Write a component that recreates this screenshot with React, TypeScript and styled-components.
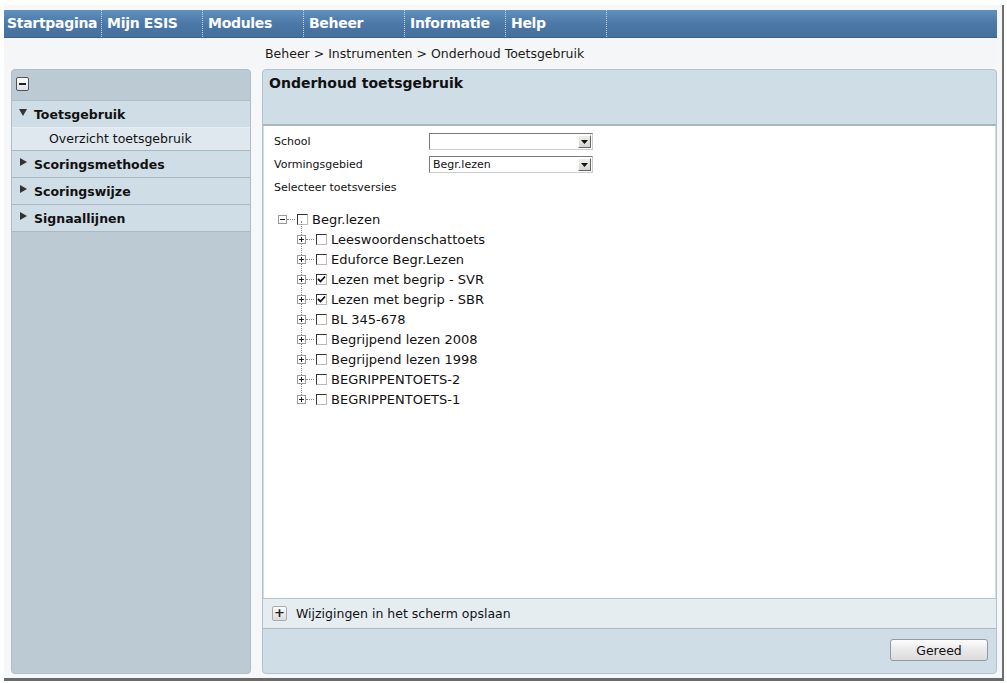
import React from 'react'
import styled, { createGlobalStyle } from 'styled-components'

const GlobalStyle = createGlobalStyle`
  html, body {
    margin: 0;
    padding: 0;
    background: #fff;
    font-family: "DejaVu Sans", Verdana, sans-serif;
    color: #111;
  }
`

const navItems = ['Startpagina', 'Mijn ESIS', 'Modules', 'Beheer', 'Informatie', 'Help']

const menu = [
  { title: 'Toetsgebruik', open: true, children: ['Overzicht toetsgebruik'] },
  { title: 'Scoringsmethodes', open: false, children: [] },
  { title: 'Scoringswijze', open: false, children: [] },
  { title: 'Signaallijnen', open: false, children: [] },
]

const versions = [
  { name: 'Leeswoordenschattoets', checked: false },
  { name: 'Eduforce Begr.Lezen', checked: false },
  { name: 'Lezen met begrip - SVR', checked: true },
  { name: 'Lezen met begrip - SBR', checked: true },
  { name: 'BL 345-678', checked: false },
  { name: 'Begrijpend lezen 2008', checked: false },
  { name: 'Begrijpend lezen 1998', checked: false },
  { name: 'BEGRIPPENTOETS-2', checked: false },
  { name: 'BEGRIPPENTOETS-1', checked: false },
]

const App: React.FC = () => {
  return (
    <>
      <GlobalStyle />
      <Frame>
        <NavBar>
          {navItems.map((n) => (
            <NavItem key={n}>{n}</NavItem>
          ))}
        </NavBar>
        <Breadcrumb>Beheer &gt; Instrumenten &gt; Onderhoud Toetsgebruik</Breadcrumb>
        <Main>
          <SidePanel>
            <SideHeader>
              <CollapseBtn>
                <span />
              </CollapseBtn>
            </SideHeader>
            {menu.map((m) => (
              <MenuGroup key={m.title}>
                <MenuTitle>
                  <Arrow $open={m.open} />
                  {m.title}
                </MenuTitle>
                {m.children.map((c) => (
                  <MenuSub key={c}>{c}</MenuSub>
                ))}
              </MenuGroup>
            ))}
          </SidePanel>

          <ContentPanel>
            <ContentHeader>Onderhoud toetsgebruik</ContentHeader>
            <ContentBody>
              <FormGrid>
                <Label>School</Label>
                <Select>
                  <SelectValue />
                  <SelectBtn><DownArrow /></SelectBtn>
                </Select>
                <Label>Vormingsgebied</Label>
                <Select>
                  <SelectValue>Begr.lezen</SelectValue>
                  <SelectBtn><DownArrow /></SelectBtn>
                </Select>
              </FormGrid>
              <Label>Selecteer toetsversies</Label>
              <Tree>
                <TreeRow>
                  <ExpandBox>
                    <ExpandSign $plus={false} />
                  </ExpandBox>
                  <Dots $w={8} />
                  <CheckBox />
                  <TreeText>Begr.lezen</TreeText>
                </TreeRow>
                <TreeChildren>
                  {versions.map((v, i) => (
                    <TreeRow key={v.name} $child $last={i === versions.length - 1}>
                      <ExpandBox>
                        <ExpandSign $plus />
                      </ExpandBox>
                      <Dots $w={8} />
                      <CheckBox>{v.checked && <CheckMark />}</CheckBox>
                      <TreeText>{v.name}</TreeText>
                    </TreeRow>
                  ))}
                </TreeChildren>
              </Tree>
            </ContentBody>
            <SaveRow>
              <PlusBtn>+</PlusBtn>
              Wijzigingen in het scherm opslaan
            </SaveRow>
            <ActionRow>
              <Button>Gereed</Button>
            </ActionRow>
          </ContentPanel>
        </Main>
      </Frame>
    </>
  )
}

const CheckMark: React.FC = () => (
  <svg width="9" height="9" viewBox="0 0 9 9">
    <path d="M1 4 L3.5 6.5 L8 1.5" stroke="#111" strokeWidth="1.8" fill="none" />
  </svg>
)

const DownArrow: React.FC = () => (
  <svg width="7" height="4" viewBox="0 0 7 4">
    <path d="M0 0 H7 L3.5 4 Z" fill="#111" />
  </svg>
)

const Frame = styled.div`
  margin: 5px 0 0 4px;
  width: 993px;
  height: 668px;
  padding: 5px 5px 0 0;
  border-right: 2px solid #6e6e6e;
  border-bottom: 3px solid #6a6a6a;
  display: flex;
  flex-direction: column;
  background: #f6f7f8;
`

const NavBar = styled.div`
  height: 27px;
  display: flex;
  background: linear-gradient(#6090bd, #4a77a6 55%, #4570a0);
  border-bottom: 1px solid #3b5f88;
`

const NavItem = styled.div`
  width: 101px;
  box-sizing: border-box;
  padding-left: 5px;
  border-right: 1px dotted #c5d5e6;
  color: #fff;
  font-weight: bold;
  font-size: 14px;
  line-height: 27px;
  white-space: nowrap;
  overflow: hidden;
  letter-spacing: -0.3px;
  &:first-child {
    width: 98px;
    padding-left: 3px;
  }
`

const Breadcrumb = styled.div`
  height: 30px;
  line-height: 31px;
  padding-left: 261px;
  font-size: 12.5px;
  color: #1a1a1a;
  background: #f5f6f7;
`

const Main = styled.div`
  flex: 1;
  display: flex;
  gap: 11px;
  padding: 1px 0 4px 7px;
`

const SidePanel = styled.div`
  width: 239px;
  background: #bccad3;
  border: 1px solid #aebdc7;
  border-radius: 4px;
  overflow: hidden;
  display: flex;
  flex-direction: column;
`

const SideHeader = styled.div`
  height: 31px;
  padding: 7px 0 0 4px;
  box-sizing: border-box;
  border-bottom: 1px solid #aebdc7;
`

const CollapseBtn = styled.div`
  width: 11px;
  height: 12px;
  border: 1px solid #555;
  border-radius: 2px;
  background: linear-gradient(#fff, #dde3e8);
  display: flex;
  align-items: center;
  justify-content: center;
  span {
    width: 7px;
    height: 2px;
    background: #222;
  }
`

const MenuGroup = styled.div`
  border-bottom: 1px solid #a9b9c4;
`

const MenuTitle = styled.div`
  height: 26px;
  display: flex;
  align-items: center;
  padding-left: 7px;
  background: #cfdde6;
  font-weight: bold;
  font-size: 12.5px;
  color: #111;
`

const Arrow = styled.span<{ $open: boolean }>`
  width: 0;
  height: 0;
  margin-right: 7px;
  margin-top: -4px;
  ${(p) =>
    p.$open
      ? `border-left: 4px solid transparent; border-right: 4px solid transparent; border-top: 7px solid #333;`
      : `border-top: 4px solid transparent; border-bottom: 4px solid transparent; border-left: 7px solid #333; margin-left: 1px; margin-right: 7px;`}
`

const MenuSub = styled.div`
  height: 22px;
  line-height: 22px;
  padding-left: 37px;
  background: #dfe8ee;
  border-top: 1px solid #e8eff3;
  font-size: 12.5px;
  color: #111;
`

const ContentPanel = styled.div`
  width: 736px;
  background: #cfdde6;
  border: 1px solid #b3c3ce;
  border-radius: 4px;
  overflow: hidden;
  display: flex;
  flex-direction: column;
`

const ContentHeader = styled.div`
  height: 56px;
  padding: 5px 0 0 6px;
  box-sizing: border-box;
  font-weight: bold;
  font-size: 14px;
  color: #111;
  border-bottom: 2px solid #a7b8c4;
`

const ContentBody = styled.div`
  flex: 1;
  background: #fff;
  margin: 0 1px;
  padding: 6px 10px;
`

const FormGrid = styled.div`
  display: grid;
  grid-template-columns: 155px 164px;
  row-gap: 6px;
  align-items: center;
  margin: 1px 0 8px;
`

const Label = styled.div`
  font-size: 11px;
  color: #111;
`

const Select = styled.div`
  height: 17px;
  box-sizing: border-box;
  border: 1px solid #7a7a7a;
  border-right-color: #ccc;
  border-bottom-color: #ccc;
  background: #fff;
  display: flex;
`

const SelectValue = styled.div`
  flex: 1;
  font-size: 11px;
  line-height: 15px;
  padding-left: 3px;
`

const SelectBtn = styled.div`
  width: 13px;
  margin: 1px;
  background: linear-gradient(#eeeeea, #d4d4d0);
  border: 1px solid;
  border-color: #fff #666 #666 #fff;
  box-sizing: border-box;
  display: flex;
  align-items: center;
  justify-content: center;
`

const Tree = styled.div`
  margin-top: 15px;
  padding-left: 4px;
`

const TreeChildren = styled.div`
  padding-left: 19px;
`

const TreeRow = styled.div<{ $child?: boolean; $last?: boolean }>`
  height: 20px;
  display: flex;
  align-items: center;
  position: relative;
  ${(p) =>
    p.$child &&
    `&::before {
      content: '';
      position: absolute;
      left: 4px;
      top: -8px;
      height: ${p.$last ? '18px' : '20px'};
      border-left: 1px dotted #888;
    }`}
`

const ExpandBox = styled.div`
  width: 7px;
  height: 7px;
  border: 1px solid #9a9a9a;
  background: #fff;
  display: flex;
  align-items: center;
  justify-content: center;
  position: relative;
  z-index: 1;
`

const ExpandSign = styled.span<{ $plus: boolean }>`
  position: relative;
  width: 5px;
  height: 1px;
  background: #222;
  &::after {
    content: '';
    display: ${(p) => (p.$plus ? 'block' : 'none')};
    position: absolute;
    left: 2px;
    top: -2px;
    width: 1px;
    height: 5px;
    background: #222;
  }
`

const Dots = styled.span<{ $w: number }>`
  width: ${(p) => p.$w}px;
  border-top: 1px dotted #888;
  margin-right: 2px;
`

const CheckBox = styled.span`
  width: 11px;
  height: 11px;
  flex-shrink: 0;
  box-sizing: border-box;
  border: 1px solid #333;
  border-right-color: #bbb;
  border-bottom-color: #bbb;
  background: #fff;
  display: flex;
  align-items: center;
  justify-content: center;
`

const TreeText = styled.span`
  margin-left: 4px;
  font-size: 13px;
  color: #111;
`

const SaveRow = styled.div`
  height: 29px;
  display: flex;
  align-items: center;
  gap: 9px;
  padding-left: 9px;
  background: #e6edf1;
  border-top: 1px solid #b8c6d0;
  border-bottom: 1px solid #a9bac5;
  font-size: 12.5px;
  color: #111;
`

const PlusBtn = styled.span`
  width: 15px;
  height: 15px;
  box-sizing: border-box;
  border: 1px solid #aaa;
  border-radius: 2px;
  background: linear-gradient(#fbfbfb, #dcdcdc);
  font-size: 13px;
  font-weight: bold;
  line-height: 12px;
  text-align: center;
  color: #222;
`

const ActionRow = styled.div`
  height: 44px;
  display: flex;
  justify-content: flex-end;
  align-items: flex-start;
  padding: 10px 8px 0 0;
  box-sizing: border-box;
`

const Button = styled.button`
  width: 98px;
  height: 22px;
  border: 1px solid #8f9aa3;
  border-radius: 3px;
  background: linear-gradient(#fdfdfd, #e9e9e9 50%, #dcdcdc);
  font-family: "DejaVu Sans", Verdana, sans-serif;
  font-size: 12.5px;
  color: #111;
  padding: 0;
`

export default App
